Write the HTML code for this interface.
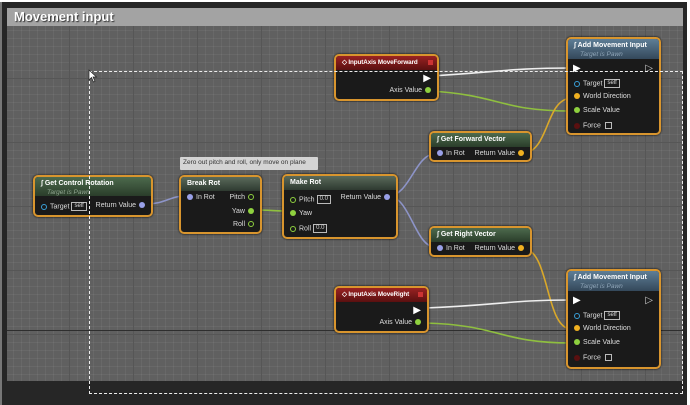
<!DOCTYPE html>
<html><head><meta charset="utf-8"><style>
*{margin:0;padding:0;box-sizing:border-box}
body{width:690px;height:405px;overflow:hidden;background:#fff;font-family:"Liberation Sans",sans-serif;position:relative}
.outer{position:absolute;left:0;top:2px;width:687px;height:403px;background:#262626;border-left:2px solid #777}
.grid{position:absolute;left:7px;top:8px;width:676px;height:373px;background-color:#606060;
background-image:linear-gradient(#565656 1px,transparent 1px),linear-gradient(90deg,#565656 1px,transparent 1px),linear-gradient(rgba(255,255,255,.05) 1px,transparent 1px),linear-gradient(90deg,rgba(255,255,255,.05) 1px,transparent 1px);
background-size:64px 64px,64px 64px,8px 8px,8px 8px;background-position:-2px 6px}
.title{position:absolute;left:7px;top:8px;width:676px;height:18px;background:#a3a3a3;color:#fff;font-weight:bold;font-size:13px;padding-left:7px;line-height:18px;text-shadow:1px 1px 1px #333}
.node{position:absolute;border:2px solid #d8952e;border-radius:5px;background:#1a1a1a;box-shadow:0 0 2px #000;color:#ddd;font-size:7px}
.hd{height:14px;color:#fff;font-weight:bold;font-size:7px;padding:3px 0 0 6px;border-radius:3px 3px 0 0;position:relative;white-space:nowrap}
.hd .sub{display:block;font-weight:normal;font-style:italic;color:#8fa58f;font-size:6.5px;margin-top:2px;padding-left:6px}
.fn{background:linear-gradient(#4d6a4d,#2a3d2a)}
.bl{background:linear-gradient(#5e7e96,#34485a)}
.ev{background:linear-gradient(#9a2222,#5a1010);font-size:6.3px;letter-spacing:-.1px}
.pu{background:linear-gradient(#5a6a5a,#2e3a30)}
.l{position:absolute;white-space:nowrap}
.d{display:inline-block;width:6px;height:6px;border-radius:50%;vertical-align:middle;margin:0 3px}
.b{display:inline-block;border:1px solid #bbb;padding:0 2px;font-size:6px;line-height:7px;vertical-align:middle;margin-left:2px}
.dash{position:absolute;left:89px;top:71px;width:594px;height:323px;border:1px dashed #eee}
</style></head><body>
<div class="outer"></div>
<div class="grid"></div>
<div style="position:absolute;left:7px;top:330px;width:676px;height:1px;background:#2e2e2e"></div>
<div class="title">Movement input</div>

<svg style="position:absolute;left:0;top:0" width="690" height="405">
<g fill="none" stroke-width="1.6">
<path d="M430 76 C500 72 510 68 571 68" stroke="#eee"/>
<path d="M430 91 C500 95 500 111 571 111" stroke="#8fbf3f"/>
<path d="M523 154 C550 150 545 100 571 98" stroke="#d9a82a"/>
<path d="M146 204 C165 204 170 196 185 196" stroke="#8d94c8"/>
<path d="M253 210 C270 210 275 211 290 211" stroke="#8fbf3f"/>
<path d="M388 196 C410 196 415 154 435 154" stroke="#8d94c8"/>
<path d="M388 196 C410 196 415 247 435 247" stroke="#8d94c8"/>
<path d="M523 248 C550 250 545 328 571 329" stroke="#d9a82a"/>
<path d="M425 308 C500 305 510 300 571 300" stroke="#eee"/>
<path d="M425 323 C500 325 500 343 571 343" stroke="#8fbf3f"/>
</g></svg>

<div style="position:absolute;left:180px;top:157px;width:138px;height:13px;background:#d4d4d4;color:#333;font-size:6.5px;padding:2px 3px;border-radius:1px;white-space:nowrap;overflow:hidden">Zero out pitch and roll, only move on plane</div>

<div class="node" style="left:334px;top:54px;width:105px;height:47px">
<div class="hd ev">◇ InputAxis MoveForward<span style="position:absolute;right:4px;top:4px;width:5px;height:5px;background:#c33"></span></div>
<div class="l" style="right:6px;top:17px;color:#fff;font-size:10px">▶</div>
<div class="l" style="right:3px;top:31px">Axis Value<span class="d" style="background:#8fd13f"></span></div>
</div>
<div class="node" style="left:566px;top:37px;width:95px;height:98px">
<div class="hd bl" style="height:20px">∫ Add Movement Input<span class="sub" style="color:#8fa5b8">Target is Pawn</span></div>
<div class="l" style="left:5px;top:24px;color:#fff;font-size:10px">▶</div>
<div class="l" style="right:6px;top:24px;color:#ccc;font-size:10px">▷</div>
<div class="l" style="left:3px;top:40px"><span class="d" style="border:1px solid #3aa0d8"></span>Target<span class="b">self</span></div>
<div class="l" style="left:3px;top:54px"><span class="d" style="background:#f0b020"></span>World Direction</div>
<div class="l" style="left:3px;top:68px"><span class="d" style="background:#8fd13f"></span>Scale Value</div>
<div class="l" style="left:3px;top:83px"><span class="d" style="background:#5a1010"></span>Force <span class="b" style="width:7px;height:7px;padding:0"></span></div>
</div>
<div class="node" style="left:429px;top:131px;width:103px;height:31px">
<div class="hd fn">∫ Get Forward Vector</div>
<div class="l" style="left:3px;top:17px"><span class="d" style="background:#99a0e8"></span>In Rot</div>
<div class="l" style="right:3px;top:17px">Return Value<span class="d" style="background:#f0b020"></span></div>
</div>
<div class="node" style="left:33px;top:175px;width:120px;height:42px">
<div class="hd fn" style="height:19px">∫ Get Control Rotation<span class="sub">Target is Pawn</span></div>
<div class="l" style="left:3px;top:25px"><span class="d" style="border:1px solid #3aa0d8"></span>Target<span class="b">self</span></div>
<div class="l" style="right:3px;top:25px">Return Value<span class="d" style="background:#99a0e8"></span></div>
</div>
<div class="node" style="left:179px;top:175px;width:83px;height:59px">
<div class="hd pu">Break Rot</div>
<div class="l" style="left:3px;top:17px"><span class="d" style="background:#99a0e8"></span>In Rot</div>
<div class="l" style="right:3px;top:17px">Pitch<span class="d" style="border:1px solid #8fd13f"></span></div>
<div class="l" style="right:3px;top:31px">Yaw<span class="d" style="background:#8fd13f"></span></div>
<div class="l" style="right:3px;top:44px">Roll<span class="d" style="border:1px solid #8fd13f"></span></div>
</div>
<div class="node" style="left:282px;top:174px;width:116px;height:65px">
<div class="hd pu">Make Rot</div>
<div class="l" style="left:3px;top:19px"><span class="d" style="border:1px solid #8fd13f"></span>Pitch<span class="b">0.0</span></div>
<div class="l" style="right:3px;top:18px">Return Value<span class="d" style="background:#99a0e8"></span></div>
<div class="l" style="left:3px;top:34px"><span class="d" style="background:#8fd13f"></span>Yaw</div>
<div class="l" style="left:3px;top:48px"><span class="d" style="border:1px solid #8fd13f"></span>Roll<span class="b">0.0</span></div>
</div>
<div class="node" style="left:429px;top:226px;width:103px;height:31px">
<div class="hd fn">∫ Get Right Vector</div>
<div class="l" style="left:3px;top:17px"><span class="d" style="background:#99a0e8"></span>In Rot</div>
<div class="l" style="right:3px;top:17px">Return Value<span class="d" style="background:#f0b020"></span></div>
</div>
<div class="node" style="left:334px;top:286px;width:95px;height:47px">
<div class="hd ev">◇ InputAxis MoveRight<span style="position:absolute;right:4px;top:4px;width:5px;height:5px;background:#c33"></span></div>
<div class="l" style="right:6px;top:17px;color:#fff;font-size:10px">▶</div>
<div class="l" style="right:3px;top:31px">Axis Value<span class="d" style="background:#8fd13f"></span></div>
</div>
<div class="node" style="left:566px;top:269px;width:95px;height:100px">
<div class="hd bl" style="height:20px">∫ Add Movement Input<span class="sub" style="color:#8fa5b8">Target is Pawn</span></div>
<div class="l" style="left:5px;top:24px;color:#fff;font-size:10px">▶</div>
<div class="l" style="right:6px;top:24px;color:#ccc;font-size:10px">▷</div>
<div class="l" style="left:3px;top:40px"><span class="d" style="border:1px solid #3aa0d8"></span>Target<span class="b">self</span></div>
<div class="l" style="left:3px;top:54px"><span class="d" style="background:#f0b020"></span>World Direction</div>
<div class="l" style="left:3px;top:68px"><span class="d" style="background:#8fd13f"></span>Scale Value</div>
<div class="l" style="left:3px;top:83px"><span class="d" style="background:#5a1010"></span>Force <span class="b" style="width:7px;height:7px;padding:0"></span></div>
</div>

<div class="dash"></div>
<svg style="position:absolute;left:88px;top:69px" width="10" height="14"><path d="M1 1 L1 11 L3.5 8.5 L5.5 13 L7 12.3 L5 8 L8.5 8 Z" fill="#fff" stroke="#222" stroke-width=".7"/></svg>
</body></html>
